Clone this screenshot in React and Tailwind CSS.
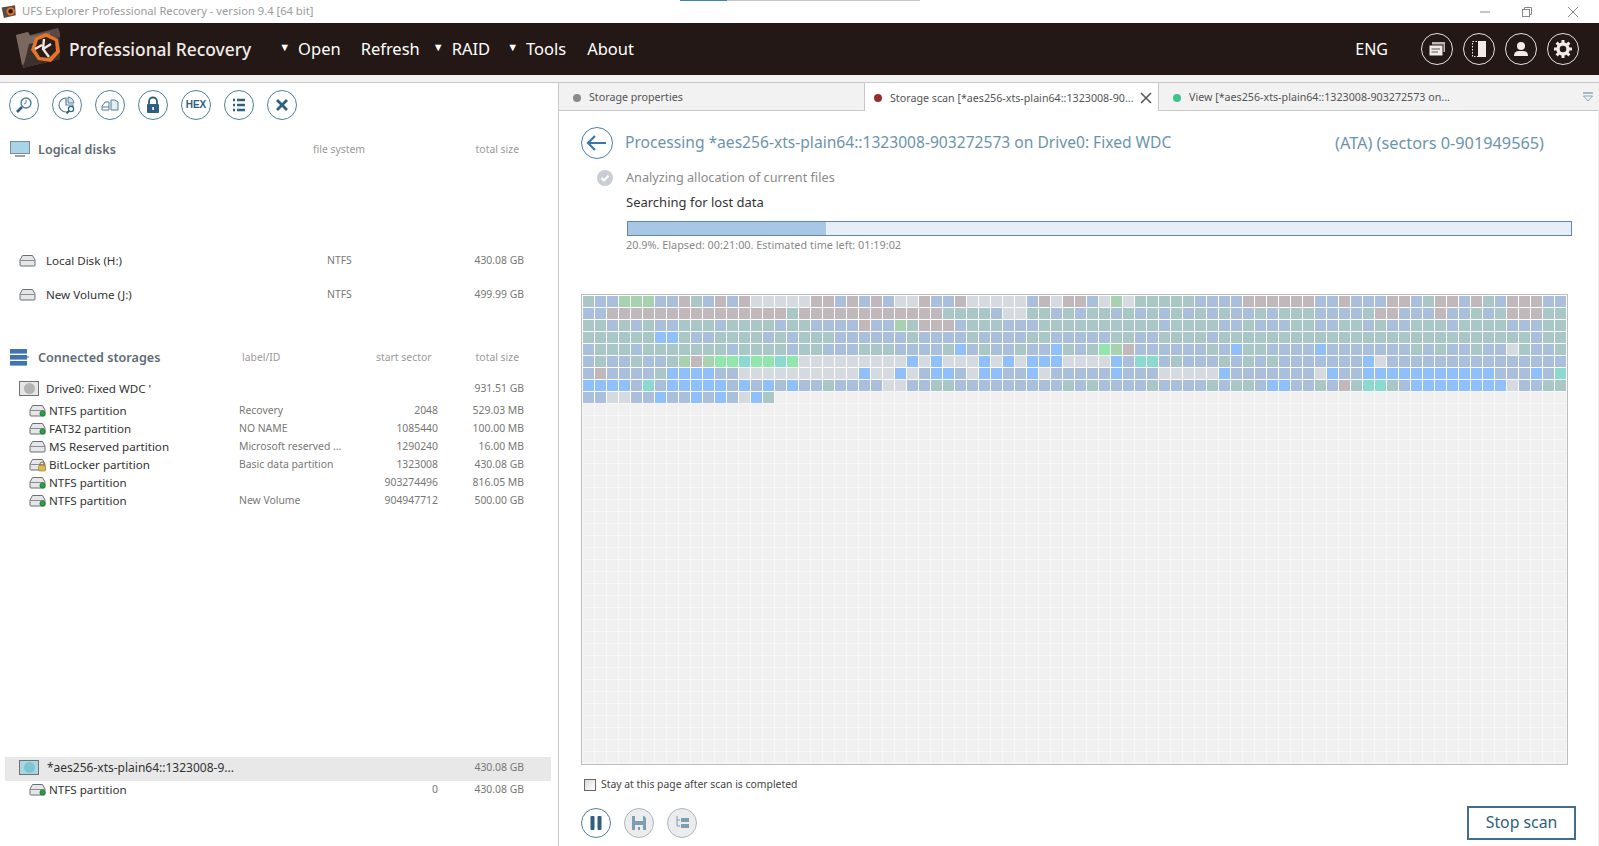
import React from 'react';

const UI = { fontFamily: '"Noto Sans", Tahoma, sans-serif' };

// scan map, one letter per cluster (33 + 28 + 21 columns), rows past the end are empty
const scanRows = [
  'tbbGGGbbrtbrbrgggggrrbrbrbggrbbrg' + 'ggggbrgrrbgGgtttttbbbbrrrrrrbb' + 'rbbbrrbtrrbrtbrrrbb',
  'bbrrrrrrrrrrrrrrrtrrrrrrrrrrrrttt' + 'tbggttbtbttbtbtbtbtbtbbtbttt' + 'bbbbtrrbbbrbbtbtrrrtt',
  'ttbtbtbbtttbttttbttbbbbrbbGtrrrbt' + 'ttbbbttttttttttbttttbbtbbbtt' + 'bbttbtbbtttbttttbbbtt',
  'ttttttlltbbttttbtbtttbbbbbbtbbbbt' + 'bbbbttbbbbbttbbttttbtttttttt' + 'ttttttttttttttttttbtt',
  'btttbtttttttbttttbttbbbtttbbbbtlb' + 'tbbtbbltbtnGrbbbbbbtblttbbbb' + 'lbbbbbbbtbtbbtbbgtbbt',
  'btbbtbbtGrGnncnncnggggggggglglgggg'.slice(0, 33) + 'lglglllgggglbccbtbbbtbtbtbbb' + 'bbbblgbbbbbbbbbbbbbbb',
  'brbbbbtllllbbgggggggggglgglgbllbg' + 'llbblgbbbbblbbbgggggl' + 'bbbbbbb' + 'glbblllllllllllbbblbc',
  'llllbcblllllblblblbbtbbbbggbbttbb' + 'bbbbbbbtbtbbbbtbbbbtbttbllbb' + 'tbrtcctbllllllllgbbtt',
  'bbggbblbblblbglt',
];

const cellColor = {
  b: 'bg-[#a9bfdc]',
  t: 'bg-[#a9c7c6]',
  r: 'bg-[#c0b8ba]',
  g: 'bg-[#d5dae1]',
  l: 'bg-[#8fc0fb]',
  G: 'bg-[#a7d2b0]',
  n: 'bg-[#90e6ab]',
  c: 'bg-[#8cd9cf]',
  e: 'bg-[#f0f0f0] outline outline-1 outline-[#f7f7f7]',
};

const COLS = 82;
const ROWS = 39;

const cells = [];
for (let r = 0; r < ROWS; r++) {
  const line = scanRows[r] || '';
  for (let c = 0; c < COLS; c++) {
    cells.push(line[c] || (r < 8 ? 'b' : 'e'));
  }
}

const Circle = ({ children, className = '' }) => (
  <div className={`w-[30px] h-[30px] rounded-full border border-[#4f7f9d] flex items-center justify-center shrink-0 ${className}`}>
    <svg width="20" height="20" viewBox="0 0 20 20">{children}</svg>
  </div>
);

const DarkCircle = ({ children }) => (
  <div className="w-[32px] h-[32px] rounded-full border border-[#e6e0dc] flex items-center justify-center">
    <svg width="20" height="20" viewBox="0 0 20 20">{children}</svg>
  </div>
);

const Logo = () => (
  <svg width="50" height="44" viewBox="0 0 50 44" className="shrink-0">
    <path d="M2 8 L14 5 L16 8 L44 1 L46 6 L46 32 L9 41 Z" fill="#5b4a44" />
    <path d="M2 8 L14 5 L16 9 L36 5 L36 12 L8 38 Z" fill="#7a6860" />
    <path d="M9 41 L15 17 L46 10 L46 32 Z" fill="#3e312d" />
    <path d="M32 6 L44 12 L46 25 L37 35 L24 33 L17 23 L21 11 Z" fill="#e8742a" />
    <path d="M32 10 L41 14 L42 24 L35 31 L26 30 L21 22 L24 13 Z" fill="#2a1e1a" />
    <path d="M21 22 L28 18 M30 12 L29 22 L35 30 M29 22 L37 17" stroke="#f2e8e0" strokeWidth="2.4" fill="none" />
  </svg>
);

const DiskIcon = ({ badge }) => (
  <svg width="18" height="15" viewBox="0 0 18 15" className="shrink-0">
    <path d="M3.5 2.5 H13.5 L16 7 V12 Q16 13 15 13 H2 Q1 13 1 12 V7 Z" fill="#e4e6e8" stroke="#6d6f72" />
    <path d="M1.5 7.5 H15.5" stroke="#8a8c8f" />
    {badge === 'green' && <circle cx="13.5" cy="10.5" r="2.6" fill="#27a243" stroke="#0f6d28" strokeWidth="0.7" />}
    {badge === 'lock' && (
      <g>
        <rect x="9.5" y="8.5" width="7" height="5.5" rx="1" fill="#e3b64e" stroke="#93752c" strokeWidth="0.6" />
        <path d="M11 8.5 V7 A2 2 0 0 1 15 7 V8.5" stroke="#93752c" fill="none" />
      </g>
    )}
  </svg>
);

const DriveIcon = ({ tint }) => (
  <div className={`w-[20px] h-[15px] border border-[#6f7174] flex items-center justify-center shrink-0 ${tint ? 'bg-[#a9d6e0]' : 'bg-[#e6e6e6]'}`}>
    <div className={`w-[11px] h-[11px] rounded-full ${tint ? 'bg-[#7fc4d2]' : 'bg-[#b3b3b3]'}`} />
  </div>
);

const PartRow = ({ name, label, start, size, badge }) => (
  <div className="grid grid-cols-[210px_115px_84px_86px] h-[18px] items-center pl-[29px] text-[11px]">
    <div className="flex items-center gap-[2px] text-[11.6px] text-[#333]">
      <DiskIcon badge={badge} />
      <span>{name}</span>
    </div>
    <div className="text-[10.4px] text-[#777] truncate">{label}</div>
    <div className="text-[10.4px] text-[#777] text-right">{start}</div>
    <div className="text-[10.4px] text-[#777] text-right">{size}</div>
  </div>
);

const DiskRow = ({ name, fs, size }) => (
  <div className="grid grid-cols-[308px_100px_97px] h-[34px] items-center pl-[19px]">
    <div className="flex items-center gap-[9px] text-[11.6px] text-[#333]">
      <DiskIcon />
      <span>{name}</span>
    </div>
    <div className="text-[10.4px] text-[#777]">{fs}</div>
    <div className="text-[10.4px] text-[#777] text-right">{size}</div>
  </div>
);

const LeftPanel = () => (
  <div className="w-[559px] shrink-0 border-r border-[#c8c8c8] flex flex-col">
    <div className="h-[45px] flex items-center gap-[13px] pl-[9px] pb-[2px] shrink-0">
      <Circle>
        <circle cx="12" cy="8" r="5" fill="none" stroke="#4f7f9d" strokeWidth="1.4" />
        <path d="M8 12 L3 17" stroke="#2d6080" strokeWidth="2.6" />
        <path d="M12 5 V8 L10 9" stroke="#4f7f9d" fill="none" />
      </Circle>
      <Circle>
        <path d="M9 3 A7 7 0 1 0 16 10 H9 Z" fill="none" stroke="#4f7f9d" strokeWidth="1.2" />
        <path d="M11 2 A7 7 0 0 1 17 8 H11 Z" fill="#d9e3ea" stroke="#4f7f9d" />
        <circle cx="14" cy="14" r="2.6" fill="#fff" stroke="#2d6080" strokeWidth="1.2" />
        <path d="M12 16 L9.5 18.5" stroke="#2d6080" strokeWidth="1.8" />
      </Circle>
      <Circle>
        <path d="M3 10 L5 7 H9 V15 H2 V11 Z" fill="none" stroke="#4f7f9d" />
        <path d="M2 12 H9" stroke="#4f7f9d" />
        <path d="M11 5 H15 L18 7 V15 H11 Z" fill="#e6edf2" stroke="#4f7f9d" />
      </Circle>
      <Circle>
        <path d="M6 9 V6.5 A4 4 0 0 1 14 6.5 V9" fill="none" stroke="#2d6080" strokeWidth="1.8" />
        <rect x="4" y="9" width="12" height="9" rx="1" fill="#2d6080" />
        <rect x="9.3" y="12" width="1.6" height="3" fill="#fff" />
      </Circle>
      <div className="w-[30px] h-[30px] rounded-full border border-[#4f7f9d] flex items-center justify-center shrink-0 text-[10px] font-bold text-[#2d6080]" style={{ fontFamily: '"Liberation Sans", sans-serif' }}>HEX</div>
      <Circle>
        <path d="M4 5 H6 M8 5 H16 M4 10 H6 M8 10 H16 M4 15 H6 M8 15 H16" stroke="#2d6080" strokeWidth="2.4" />
      </Circle>
      <Circle>
        <path d="M5 5 L15 15 M15 5 L5 15" stroke="#2d6080" strokeWidth="2.8" />
      </Circle>
    </div>

    <div className="grid grid-cols-[303px_156px_50px] h-[44px] items-center pl-[10px] shrink-0 whitespace-nowrap">
      <div className="flex items-center gap-[8px] text-[12.6px] font-semibold text-[#5e6b75]">
        <svg width="20" height="17" viewBox="0 0 20 17">
          <rect x="0.5" y="0.5" width="19" height="12" fill="#a8d4ea" stroke="#7c8b95" />
          <rect x="5" y="14" width="10" height="2" fill="#9aa3a9" />
        </svg>
        <span>Logical disks</span>
      </div>
      <div className="text-[10.4px] text-[#999]">file system</div>
      <div className="text-[10.4px] text-[#999] text-right">total size</div>
    </div>

    <div className="mt-[72px]">
      <DiskRow name="Local Disk (H:)" fs="NTFS" size="430.08 GB" />
      <DiskRow name="New Volume (J:)" fs="NTFS" size="499.99 GB" />
    </div>

    <div className="grid grid-cols-[232px_134px_66px_77px] h-[30px] items-center pl-[10px] mt-[31px] shrink-0 whitespace-nowrap">
      <div className="flex items-center gap-[9px] text-[12.6px] font-semibold text-[#5e6b75]">
        <svg width="19" height="17" viewBox="0 0 19 17">
          <rect x="0" y="0" width="17" height="4.6" fill="#3f74ae" />
          <rect x="0" y="6" width="17" height="4.6" fill="#3f74ae" />
          <rect x="0" y="12" width="17" height="4.6" fill="#3f74ae" />
          <path d="M17 8 H19" stroke="#3f74ae" />
        </svg>
        <span>Connected storages</span>
      </div>
      <div className="text-[10.4px] text-[#999]">label/ID</div>
      <div className="text-[10.4px] text-[#999]">start sector</div>
      <div className="text-[10.4px] text-[#999] text-right">total size</div>
    </div>

    <div className="grid grid-cols-[393px_112px] h-[24px] mt-[4px] items-center pl-[19px] shrink-0">
      <div className="flex items-center gap-[7px] text-[11.6px] text-[#333]">
        <DriveIcon />
        <span>Drive0: Fixed WDC '</span>
      </div>
      <div className="text-[10.4px] text-[#777] text-right">931.51 GB</div>
    </div>
    <div className="mt-[1px]">
      <PartRow name="NTFS partition" label="Recovery" start="2048" size="529.03 MB" badge="green" />
      <PartRow name="FAT32 partition" label="NO NAME" start="1085440" size="100.00 MB" badge="green" />
      <PartRow name="MS Reserved partition" label="Microsoft reserved ..." start="1290240" size="16.00 MB" />
      <PartRow name="BitLocker partition" label="Basic data partition" start="1323008" size="430.08 GB" badge="lock" />
      <PartRow name="NTFS partition" label="" start="903274496" size="816.05 MB" badge="green" />
      <PartRow name="NTFS partition" label="New Volume" start="904947712" size="500.00 GB" badge="green" />
    </div>

    <div className="mt-auto mb-[47px]">
      <div className="ml-[5px] mr-[7px] h-[24px] bg-[#e8e8e8] grid grid-cols-[393px_126px] items-center pl-[14px]">
        <div className="flex items-center gap-[8px] text-[12px] text-[#333] pb-[3px]">
          <DriveIcon tint />
          <span>*aes256-xts-plain64::1323008-9...</span>
        </div>
        <div className="text-[10.4px] text-[#777] text-right pr-[14px] pb-[2px]">430.08 GB</div>
      </div>
      <PartRow name="NTFS partition" label="" start="0" size="430.08 GB" badge="green" />
    </div>
  </div>
);

const Tab = ({ dot, text, className, children }) => (
  <div className={`flex items-center text-[10.7px] text-[#555] shrink-0 pt-[2px] ${className}`}>
    <span className={`w-[8px] h-[8px] rounded-full shrink-0 ${dot}`} />
    <span className="ml-[8px] whitespace-nowrap">{text}</span>
    {children}
  </div>
);

const RightPanel = () => (
  <div className="flex-1 min-w-0 flex flex-col border-r border-[#f0f0f0]">
    <div className="h-[28px] bg-[#f2f2f2] border-b border-[#c8c8c8] flex items-stretch relative shrink-0">
      <Tab dot="bg-[#8a8a8a]" text="Storage properties" className="w-[305px] pl-[14px]" />
      <Tab dot="bg-[#9c2b2e]" text="Storage scan [*aes256-xts-plain64::1323008-90..." className="w-[295px] pl-[9px] bg-white self-start h-[28px] border-x border-[#c8c8c8]">
        <svg width="12" height="12" viewBox="0 0 12 12" className="ml-[6px] shrink-0">
          <path d="M1 1 L11 11 M11 1 L1 11" stroke="#555" strokeWidth="1.5" />
        </svg>
      </Tab>
      <Tab dot="bg-[#3cc48a]" text="View [*aes256-xts-plain64::1323008-903272573 on..." className="pl-[14px]" />
      <svg width="12" height="10" viewBox="0 0 12 10" className="absolute right-[4px] top-[9px]">
        <path d="M1 1 H11" stroke="#8aa6b8" strokeWidth="1.5" />
        <path d="M1.5 4 H10.5 L6 9 Z" fill="none" stroke="#8aa6b8" />
      </svg>
    </div>

    <div className="flex-1 pl-[22px] pr-[22px] pt-[16px] flex flex-col min-h-0">
      <div className="flex items-center h-[32px]">
        <div className="w-[32px] h-[32px] rounded-full border border-[#4f7f9d] flex items-center justify-center shrink-0">
          <svg width="22" height="18" viewBox="0 0 22 18">
            <path d="M9 2 L2 9 L9 16 M2 9 H20" fill="none" stroke="#3f75a6" strokeWidth="2.2" />
          </svg>
        </div>
        <div className="ml-[12px] flex-1 flex text-[#6b94ac] whitespace-nowrap pt-[1px]">
          <span className="w-[710px] text-[15.6px]">Processing *aes256-xts-plain64::1323008-903272573 on Drive0: Fixed WDC</span>
          <span className="text-[16.3px]">(ATA) (sectors 0-901949565)</span>
        </div>
      </div>

      <div className="flex items-center h-[20px] mt-[9px]">
        <svg width="16" height="16" viewBox="0 0 16 16" className="ml-[16px] shrink-0">
          <circle cx="8" cy="8" r="8" fill="#c9ced6" />
          <path d="M4.5 8 L7 10.5 L11.5 5.5" stroke="#fff" strokeWidth="2" fill="none" />
        </svg>
        <span className="ml-[13px] text-[12.7px] text-[#8a8a8a]">Analyzing allocation of current files</span>
      </div>
      <div className="h-[20px] mt-[5px] ml-[45px] flex items-center text-[13px] text-[#333]">Searching for lost data</div>

      <div className="h-[15px] mt-[8px] ml-[46px] mr-[4px] border border-[#5f88a8] bg-[#e7eef7]">
        <div className="h-full w-[21%] bg-[#a8c6e6]" />
      </div>
      <div className="ml-[45px] mt-[1px] h-[16px] flex items-center text-[10.85px] text-[#888]">20.9%. Elapsed: 00:21:00. Estimated time left: 01:19:02</div>

      <div className="mt-[41px] w-[987px] border border-[#bdbdbd] bg-white p-[1px] shrink-0">
        <div className="grid grid-cols-[repeat(82,11px)] auto-rows-[11px] gap-[1px]">
          {cells.map((k, i) => (
            <div key={i} className={cellColor[k]} />
          ))}
        </div>
      </div>

      <div className="flex items-center h-[14px] mt-[13px] ml-[3px]">
        <div className="w-[12px] h-[12px] border border-[#666] bg-gradient-to-br from-[#dcdcdc] to-white" />
        <span className="ml-[5px] text-[10.4px] text-[#444]">Stay at this page after scan is completed</span>
      </div>

      <div className="flex items-center justify-between mt-[14px]">
        <div className="flex items-center gap-[13px]">
          <div className="w-[30px] h-[30px] rounded-full border border-[#4f7f9d] flex items-center justify-center">
            <svg width="14" height="16" viewBox="0 0 14 16">
              <rect x="1.5" y="1" width="4" height="14" rx="1" fill="#2d6080" />
              <rect x="8.5" y="1" width="4" height="14" rx="1" fill="#2d6080" />
            </svg>
          </div>
          <div className="w-[30px] h-[30px] rounded-full border border-[#a9b8c2] bg-[#ececec] flex items-center justify-center">
            <svg width="16" height="16" viewBox="0 0 16 16">
              <path d="M1 1 H13 L15 3 V15 H1 Z" fill="#7d9db2" />
              <rect x="4" y="1" width="8" height="5" fill="#ececec" />
              <rect x="4" y="10" width="8" height="5" fill="#ececec" />
              <rect x="7" y="12" width="2" height="3" fill="#7d9db2" />
            </svg>
          </div>
          <div className="w-[30px] h-[30px] rounded-full border border-[#a9b8c2] bg-[#ececec] flex items-center justify-center">
            <svg width="16" height="16" viewBox="0 0 16 16">
              <path d="M3 1 V11 M3 5 H6 M3 11 H6" stroke="#7d9db2" fill="none" />
              <rect x="7" y="3" width="8" height="4" fill="#7d9db2" />
              <rect x="7" y="9" width="8" height="4" fill="#7d9db2" />
            </svg>
          </div>
        </div>
        <div className="w-[109px] h-[34px] border-2 border-[#3f6f8c] flex items-center justify-center text-[15.8px] text-[#2d5e7c]">Stop scan</div>
      </div>
    </div>
  </div>
);

export default function App() {
  return (
    <div className="w-[1599px] h-[846px] bg-white flex flex-col overflow-hidden relative" style={UI}>
      <div className="h-[23px] flex items-center shrink-0">
        <svg width="16" height="16" viewBox="0 0 50 44" className="ml-[1px]">
          <path d="M2 8 L44 1 L46 32 L9 41 Z" fill="#5b4a44" />
          <circle cx="30" cy="20" r="13" fill="#e8742a" />
          <circle cx="30" cy="20" r="7" fill="#2a1e1a" />
        </svg>
        <span className="ml-[5px] text-[11.2px] text-[#9a9a9a]">UFS Explorer Professional Recovery - version 9.4 [64 bit]</span>
        <div className="ml-auto flex items-center">
          <svg width="12" height="12" viewBox="0 0 12 12" className="mr-[30px]"><path d="M1 6 H11" stroke="#888" /></svg>
          <svg width="12" height="12" viewBox="0 0 12 12" className="mr-[34px]">
            <rect x="1.5" y="3.5" width="7" height="7" fill="none" stroke="#888" />
            <path d="M3.5 3.5 V1.5 H10.5 V8.5 H8.5" fill="none" stroke="#888" />
          </svg>
          <svg width="12" height="12" viewBox="0 0 12 12" className="mr-[20px]"><path d="M1 1 L11 11 M11 1 L1 11" stroke="#888" /></svg>
        </div>
      </div>
      <div className="absolute left-[680px] top-0 w-[47px] h-[1px] bg-[#3f86b8]" />
      <div className="absolute left-[727px] top-0 w-[193px] h-[1px] bg-[#c8c8c8]" />

      <div className="h-[52px] bg-[#231815] flex items-center shrink-0 text-white">
        <div className="ml-[14px]"><Logo /></div>
        <span className="ml-[5px] text-[17.4px] font-medium text-[#f1ece8] whitespace-nowrap">Professional Recovery</span>
        <div className="flex items-center text-[16.5px] ml-[28px]">
          <span className="text-[11px] mb-[4px] mr-[8px]">▼</span>
          <span>Open</span>
          <span className="ml-[20px]">Refresh</span>
          <span className="text-[11px] mb-[4px] ml-[13px] mr-[8px]">▼</span>
          <span>RAID</span>
          <span className="text-[11px] mb-[4px] ml-[17px] mr-[8px]">▼</span>
          <span>Tools</span>
          <span className="ml-[21px]">About</span>
        </div>
        <div className="ml-auto flex items-center">
          <span className="text-[16px] mr-[33px]">ENG</span>
          <div className="flex items-center gap-[10px] mr-[20px]">
            <DarkCircle>
              <rect x="5" y="3" width="13" height="10" fill="#bdb7b2" />
              <rect x="2" y="6" width="14" height="11" fill="#f1ece8" stroke="#231815" />
              <path d="M4.5 10 H13 M4.5 13 H11" stroke="#555" />
            </DarkCircle>
            <DarkCircle>
              <rect x="3.5" y="2.5" width="6" height="15" fill="none" stroke="#f1ece8" strokeDasharray="1.5 1.5" />
              <rect x="9" y="2" width="8" height="16" fill="#f1ece8" />
            </DarkCircle>
            <DarkCircle>
              <circle cx="10" cy="7" r="4" fill="#f1ece8" />
              <path d="M3 17 Q3 12 8 12 H12 Q17 12 17 17 Z" fill="#f1ece8" />
            </DarkCircle>
            <DarkCircle>
              <circle cx="10" cy="10" r="5" fill="none" stroke="#f1ece8" strokeWidth="3.4" />
              <path d="M10 1 V4 M10 16 V19 M1 10 H4 M16 10 H19 M3.6 3.6 L5.8 5.8 M14.2 14.2 L16.4 16.4 M3.6 16.4 L5.8 14.2 M14.2 5.8 L16.4 3.6" stroke="#f1ece8" strokeWidth="3" />
            </DarkCircle>
          </div>
        </div>
      </div>

      <div className="h-[8px] bg-[#f3f3f3] border-b border-[#c8c8c8] shrink-0" />

      <div className="flex-1 flex min-h-0">
        <LeftPanel />
        <RightPanel />
      </div>
    </div>
  );
}
